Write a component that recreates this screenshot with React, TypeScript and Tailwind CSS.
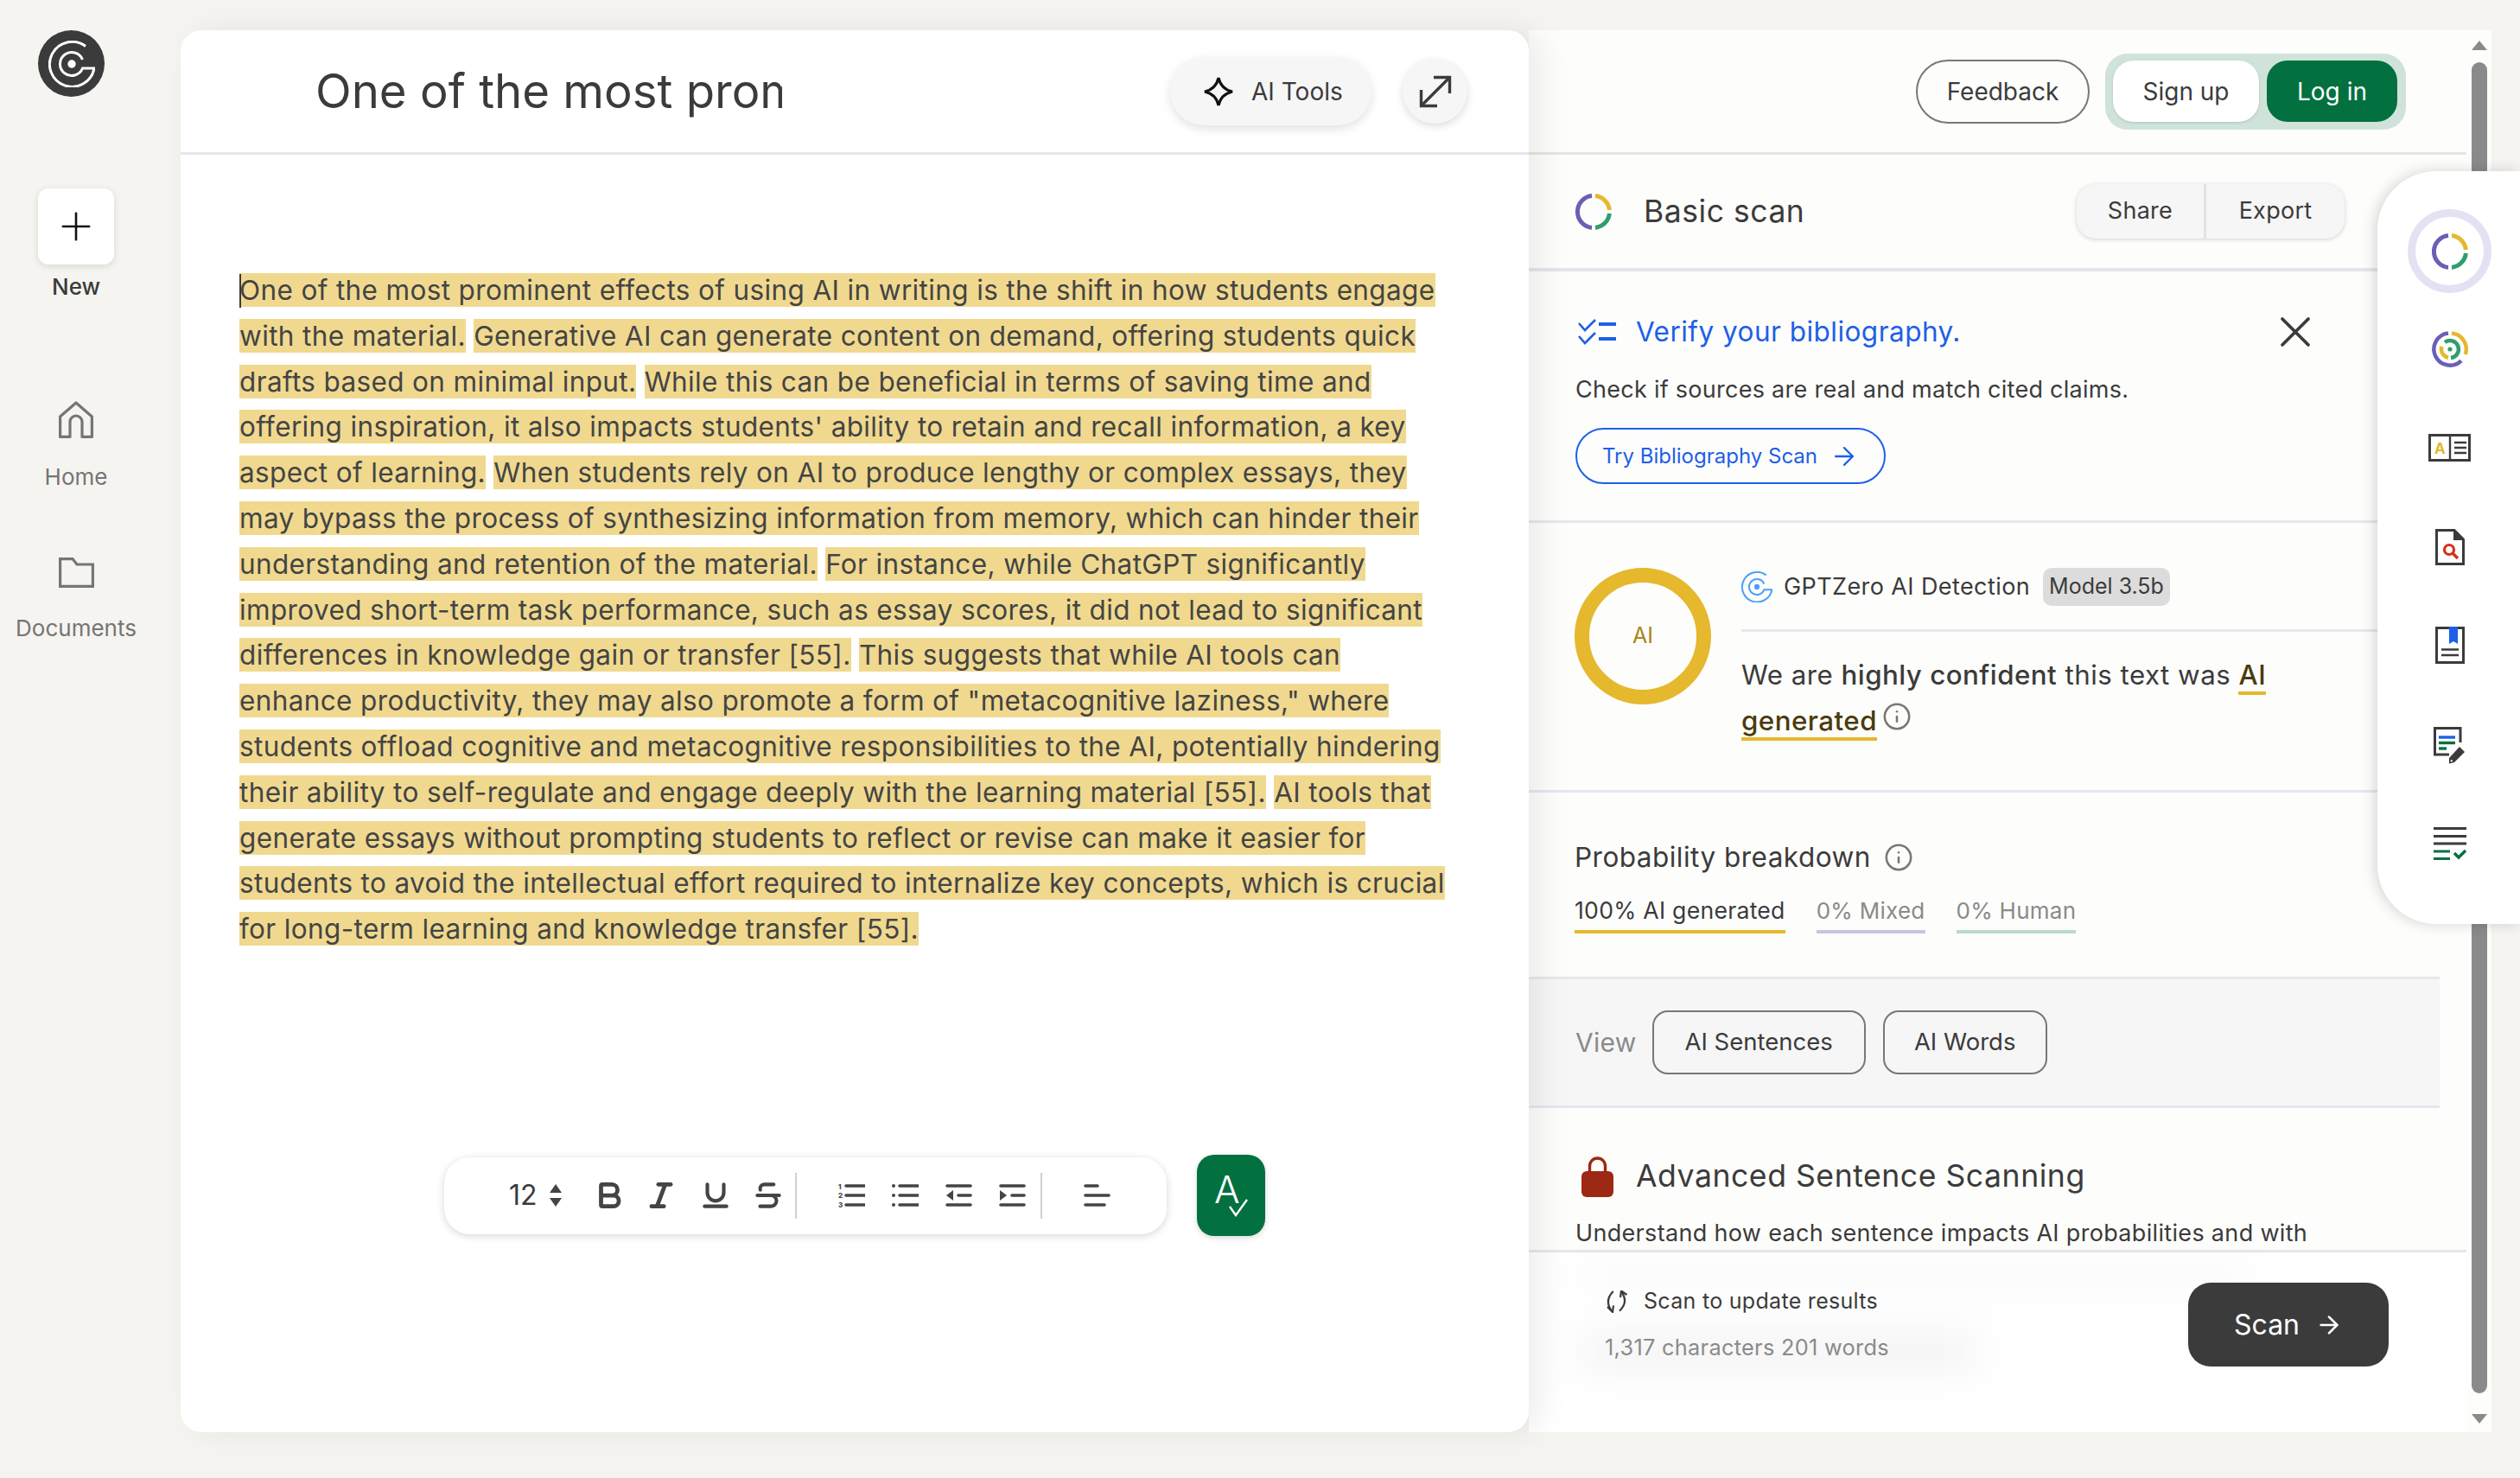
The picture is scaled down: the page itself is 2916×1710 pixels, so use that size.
import { ArrowRight, Bold, Italic, Underline, Strikethrough, Info, Plus, X } from 'lucide-react';

const sentences = [
  'One of the most prominent effects of using AI in writing is the shift in how students engage\nwith the material.',
  'Generative AI can generate content on demand, offering students quick\ndrafts based on minimal input.',
  "While this can be beneficial in terms of saving time and\noffering inspiration, it also impacts students' ability to retain and recall information, a key\naspect of learning.",
  'When students rely on AI to produce lengthy or complex essays, they\nmay bypass the process of synthesizing information from memory, which can hinder their\nunderstanding and retention of the material.',
  'For instance, while ChatGPT significantly\nimproved short-term task performance, such as essay scores, it did not lead to significant\ndifferences in knowledge gain or transfer [55].',
  'This suggests that while AI tools can\nenhance productivity, they may also promote a form of "metacognitive laziness," where\nstudents offload cognitive and metacognitive responsibilities to the AI, potentially hindering\ntheir ability to self-regulate and engage deeply with the learning material [55].',
  'AI tools that\ngenerate essays without prompting students to reflect or revise can make it easier for\nstudents to avoid the intellectual effort required to internalize key concepts, which is crucial\nfor long-term learning and knowledge transfer [55].',
];

function Swirl({ size, color }: { size: number; color: string }) {
  return (
    <svg width={size} height={size} viewBox="-27 -27 54 54" fill="none" stroke={color} strokeWidth="3">
      <path d="M16 -20.5A26 26 0 1 0 26 5H12.5A13.5 13.5 0 1 1 12.5 -5" />
      <circle r="4.7" fill={color} stroke="none" />
    </svg>
  );
}

function ScanRing({ size = 42 }: { size?: number }) {
  return (
    <svg width={size} height={size} viewBox="-21 -21 42 42" fill="none" strokeWidth="5">
      <path d="M-2 -18.4A18.5 18.5 0 0 0 -2 18.4" stroke="#6a5fb5" />
      <path d="M2 -18.4A18.5 18.5 0 0 1 18.4 -2" stroke="#e5b82e" />
      <path d="M18.4 2A18.5 18.5 0 0 1 2 18.4" stroke="#2f9e6e" />
    </svg>
  );
}

function TargetRing() {
  return (
    <svg width="42" height="42" viewBox="-21 -21 42 42" fill="none" strokeWidth="4.5">
      <path d="M-2 -18.5A18.6 18.6 0 1 0 13 13.3" stroke="#6a5fb5" />
      <path d="M2 -18.5A18.6 18.6 0 0 1 17.8 6" stroke="#e5b82e" />
      <path d="M-6 -8A10 10 0 1 1 1 10" stroke="#2f9e6e" />
      <path d="M-9.6 -3A10 10 0 0 0 -2 9.8" stroke="#e5b82e" />
      <circle r="2.6" fill="#2f9e6e" />
    </svg>
  );
}

function ReaderIcon() {
  return (
    <svg width="49" height="32" viewBox="0 0 49 32" fill="none">
      <rect x="1.5" y="1.5" width="46" height="29" stroke="#3b3b3b" strokeWidth="3" fill="#fff" />
      <path d="M25 1.5V30.5M30 10H44M30 16H44M30 22H44" stroke="#3b3b3b" strokeWidth="2.4" />
      <text x="7" y="23" fontSize="17" fontWeight="700" fill="#e5b82e" fontFamily="Inter, sans-serif">A</text>
    </svg>
  );
}

function FileSearchIcon() {
  return (
    <svg width="34" height="42" viewBox="0 0 34 42" fill="none">
      <path d="M1.5 1.5H22L32.5 12V40.5H1.5Z" stroke="#3b3b3b" strokeWidth="3" />
      <path d="M21 1L33 13H21Z" fill="#3b3b3b" />
      <circle cx="16" cy="24" r="5.5" stroke="#d62f1b" strokeWidth="3.2" />
      <path d="M20 28L26 34" stroke="#d62f1b" strokeWidth="3.6" />
    </svg>
  );
}

function BookmarkDocIcon() {
  return (
    <svg width="34" height="43" viewBox="0 0 34 43" fill="none">
      <rect x="1.5" y="1.5" width="31" height="40" stroke="#3b3b3b" strokeWidth="3" />
      <path d="M16 0H26V20L21 17L16 20Z" fill="#1d5fe8" />
      <path d="M7 26.5H27M7 33H27" stroke="#3b3b3b" strokeWidth="2.4" />
    </svg>
  );
}

function EditDocIcon() {
  return (
    <svg width="37" height="43" viewBox="0 0 37 43" fill="none">
      <path d="M31 18V1.5H1.5V32H18" stroke="#3b3b3b" strokeWidth="3" />
      <path d="M6 12H25" stroke="#1d5fe8" strokeWidth="3.4" />
      <path d="M6 18.5H25" stroke="#03703f" strokeWidth="3.4" />
      <path d="M6 25H15" stroke="#03703f" strokeWidth="3.4" />
      <path d="M30 23L36 29L24 41L18 42.5L18 36Z" fill="#3b3b3b" />
      <path d="M20 38.5L21.5 40" stroke="#fff" strokeWidth="2" />
    </svg>
  );
}

function ListCheckIcon() {
  return (
    <svg width="38" height="38" viewBox="0 0 38 38" fill="none">
      <path d="M0 1.5H38M0 10.5H38M0 19H38" stroke="#3b3b3b" strokeWidth="3" />
      <path d="M0 28H19M0 36.5H19" stroke="#03703f" strokeWidth="3" />
      <path d="M24 30L29 35L37 27" stroke="#03703f" strokeWidth="3.4" />
    </svg>
  );
}

function VerifyIcon() {
  return (
    <svg width="44" height="30" viewBox="0 0 44 30" fill="none" stroke="#1d5fe8" strokeWidth="2.6">
      <path d="M1 5L8 13L20 1" />
      <path d="M1 20L8 28L20 16" />
      <path d="M24 6H44M24 23H44" strokeWidth="4" />
    </svg>
  );
}

function LockIcon() {
  return (
    <svg width="37" height="47" viewBox="0 0 37 47" fill="none">
      <path d="M9.5 18V11A9 9 0 0 1 27.5 11V18" stroke="#9b2914" strokeWidth="3.4" />
      <rect y="17" width="37" height="30" rx="6" fill="#9b2914" />
    </svg>
  );
}

function SyncIcon() {
  return (
    <svg width="28" height="26" viewBox="0 0 28 26" fill="none" stroke="#3b3b3b" strokeWidth="2.2">
      <path d="M9.7 1Q-1 12 8 23.7" />
      <path d="M3 19L9 25L10 17.5" />
      <path d="M17 23.7Q28 13 19 1.5" />
      <path d="M25.5 5L19 0.5L18 8" />
    </svg>
  );
}

function SparkIcon() {
  return (
    <svg width="36" height="36" viewBox="0 0 36 36" fill="none" stroke="#111" strokeWidth="3.2">
      <path d="M18 2C20 11 25 16 34 18C25 20 20 25 18 34C16 25 11 20 2 18C11 16 16 11 18 2Z" />
    </svg>
  );
}

function ExpandIcon() {
  return (
    <svg width="38" height="38" viewBox="0 0 38 38" fill="none" stroke="#3b3b3b" strokeWidth="3.4">
      <path d="M3 35L35 3" />
      <path d="M17 2.5H35.5V21" />
      <path d="M2.5 17V35.5H21" />
    </svg>
  );
}

function HomeIcon() {
  return (
    <svg width="40" height="43" viewBox="0 0 40 43" fill="none" stroke="#757575" strokeWidth="3.2" strokeLinejoin="round">
      <path d="M1.6 18L20 2L38.4 18V41.4H27V24A7 7 0 0 0 13 24V41.4H1.6Z" />
    </svg>
  );
}

function FolderIcon() {
  return (
    <svg width="41" height="35" viewBox="0 0 41 35" fill="none" stroke="#757575" strokeWidth="3.2">
      <path d="M1.6 1.6H16L21 8H39.4V33.4H1.6Z" />
    </svg>
  );
}

function NumberedIcon() {
  return (
    <svg width="31" height="28" viewBox="0 0 31 28" fill="none">
      <path d="M9 3H31M9 14H31M9 25H31" stroke="#444" strokeWidth="3.6" strokeLinecap="round" />
      <text x="0" y="7" fontSize="8" fontWeight="800" fill="#444" fontFamily="Inter, sans-serif">1</text>
      <text x="0" y="17" fontSize="8" fontWeight="800" fill="#444" fontFamily="Inter, sans-serif">2</text>
      <text x="0" y="28" fontSize="8" fontWeight="800" fill="#444" fontFamily="Inter, sans-serif">3</text>
    </svg>
  );
}

function BulletIcon() {
  return (
    <svg width="31" height="28" viewBox="0 0 31 28" fill="none">
      <path d="M9 3H31M9 14H31M9 25H31" stroke="#444" strokeWidth="3.6" strokeLinecap="round" />
      <circle cx="2" cy="3" r="2" fill="#444" />
      <circle cx="2" cy="14" r="2" fill="#444" />
      <circle cx="2" cy="25" r="2" fill="#444" />
    </svg>
  );
}

function OutdentIcon() {
  return (
    <svg width="31" height="28" viewBox="0 0 31 28" fill="none">
      <path d="M2 3H29M2 25H29M15 14H29" stroke="#444" strokeWidth="3.6" strokeLinecap="round" />
      <path d="M9 8V20L1 14Z" fill="#444" />
    </svg>
  );
}

function IndentIcon() {
  return (
    <svg width="31" height="28" viewBox="0 0 31 28" fill="none">
      <path d="M2 3H29M2 25H29M15 14H29" stroke="#444" strokeWidth="3.6" strokeLinecap="round" />
      <path d="M1 8V20L9 14Z" fill="#444" />
    </svg>
  );
}

function AlignIcon() {
  return (
    <svg width="31" height="28" viewBox="0 0 31 28" fill="none">
      <path d="M2 3H16M2 14H29M2 25H24" stroke="#444" strokeWidth="3.6" strokeLinecap="round" />
    </svg>
  );
}

function Sidebar() {
  return (
    <aside className="w-[209px] shrink-0">
      <div className="w-[176px] flex flex-col items-center">
        <div className="self-start ml-[44px] w-[77px] h-[77px] rounded-full bg-[#3b3b3b] flex items-center justify-center">
          <Swirl size={54} color="#fff" />
        </div>
        <button className="mt-[106px] w-[88px] h-[88px] rounded-[12px] bg-white shadow-[0_2px_8px_rgba(0,0,0,0.12)] flex items-center justify-center">
          <Plus size={52} strokeWidth={1.2} color="#111" />
        </button>
        <div className="mt-[10px] h-[32px] leading-[32px] text-[26px] font-medium text-[#3b3b3b]">New</div>
        <div className="mt-[116px]"><HomeIcon /></div>
        <div className="mt-[29px] h-[32px] leading-[32px] text-[26px] text-[#757575]">Home</div>
        <div className="mt-[77px]"><FolderIcon /></div>
        <div className="mt-[31px] h-[32px] leading-[32px] text-[26px] text-[#757575]">Documents</div>
      </div>
    </aside>
  );
}

function Editor() {
  return (
    <main className="relative z-10 w-[1560px] shrink-0 bg-white rounded-[24px] shadow-[14px_0_36px_rgba(0,0,0,0.07)] flex flex-col">
      <header className="h-[144px] shrink-0 border-b-[3px] border-[#e7e6ee] flex items-center pl-[156px] pr-[71px]">
        <div className="w-[540px] overflow-hidden whitespace-nowrap text-[54.5px] text-[#3b3b3b]">
          One of the most prominent effects
        </div>
        <button className="ml-auto w-[233px] h-[79px] rounded-full bg-[#f6f6f6] shadow-[0_4px_12px_rgba(0,0,0,0.12)] flex items-center pl-[38px] gap-[20px] text-[28px] text-[#3b3b3b]">
          <SparkIcon />
          AI Tools
        </button>
        <button className="ml-[36px] w-[75px] h-[75px] rounded-full bg-[#f6f6f6] shadow-[0_3px_10px_rgba(0,0,0,0.14)] flex items-center justify-center">
          <ExpandIcon />
        </button>
      </header>
      <div className="flex-1 flex flex-col pl-[68px] pb-[227px]">
        <p className="relative mt-[131px] w-[1440px] whitespace-pre-line text-[31.5px] leading-[52.8px] tracking-[0.0116em] text-[#444]">
          <span className="absolute left-0 top-[7px] w-[2px] h-[39px] bg-[#3b3b3b]" />
          {sentences.map((s, i) => (
            <span key={i}>
              <span className="bg-[#f0d98f]">{s}</span>{' '}
            </span>
          ))}
        </p>
        <div className="mt-auto flex items-center">
          <div className="ml-[237px] w-[836px] h-[89px] rounded-[30px] bg-white shadow-[0_2px_10px_rgba(0,0,0,0.16)] flex items-center pl-[75px]">
            <span className="text-[32px] text-[#3b3b3b] leading-none">12</span>
            <svg className="ml-[14px]" width="14" height="26" viewBox="0 0 14 26" fill="#444">
              <path d="M7 0L14 10H0ZM7 26L0 16H14Z" />
            </svg>
            <Bold className="ml-[36px]" size={38} strokeWidth={3} color="#444" />
            <Italic className="ml-[22px]" size={38} strokeWidth={3} color="#444" />
            <Underline className="ml-[25px]" size={38} strokeWidth={2.6} color="#444" />
            <Strikethrough className="ml-[23px]" size={38} strokeWidth={2.6} color="#444" />
            <div className="ml-[12px] w-[2px] h-[53px] bg-[#cfcfd8]" />
            <div className="ml-[48px]"><NumberedIcon /></div>
            <div className="ml-[31px]"><BulletIcon /></div>
            <div className="ml-[31px]"><OutdentIcon /></div>
            <div className="ml-[31px]"><IndentIcon /></div>
            <div className="ml-[17px] w-[2px] h-[53px] bg-[#cfcfd8]" />
            <div className="ml-[48px]"><AlignIcon /></div>
          </div>
          <button className="relative ml-[35px] w-[79px] h-[94px] rounded-[20px] bg-[#03703f] shadow-[0_2px_6px_rgba(0,0,0,0.16)]">
            <span className="absolute left-[20px] top-[18px] text-[44px] leading-none font-light text-white">A</span>
            <svg className="absolute left-[36px] top-[50px]" width="24" height="22" viewBox="0 0 24 22" fill="none" stroke="#fff" strokeWidth="2.4">
              <path d="M2 10L9 20L22 2" />
            </svg>
          </button>
        </div>
      </div>
    </main>
  );
}

function ResultPanel() {
  return (
    <div className="flex-1 w-[1054px] overflow-hidden text-[#3b3b3b]">
      {/* Basic scan */}
      <section className="h-[135px] border-b-[4px] border-[#e5e4ec] flex items-center pl-[54px] pr-[110px]">
        <ScanRing />
        <h2 className="ml-[37px] text-[35.5px] tracking-[0.015em]">Basic scan</h2>
        <div className="ml-auto flex h-[63px] rounded-[22px] bg-[#f6f6f6] shadow-[0_1px_5px_rgba(0,0,0,0.18)] text-[27px] tracking-[0.01em]">
          <button className="w-[150px] border-r-[3px] border-[#e3e3e3]">Share</button>
          <button className="w-[160px]">Export</button>
        </div>
      </section>
      {/* Bibliography promo */}
      <section className="h-[291px] border-b-[3px] border-[#e7e6ee] pl-[57px] pr-[137px] pt-[50px]">
        <div className="flex items-center h-[40px]">
          <VerifyIcon />
          <span className="ml-[23px] text-[31.5px] tracking-[0.015em] text-[#1d5fe8]">Verify your bibliography.</span>
          <X className="ml-auto -my-[10px]" size={60} strokeWidth={1.5} color="#3b3b3b" />
        </div>
        <p className="-ml-[3px] mt-[27px] h-[40px] leading-[40px] text-[27px] tracking-[0.01em]">Check if sources are real and match cited claims.</p>
        <button className="-ml-[3px] mt-[24px] w-[359px] h-[65px] rounded-full border-[2.5px] border-[#1d5fe8] flex items-center justify-center gap-[14px] text-[24px] text-[#1d5fe8]">
          Try Bibliography Scan
          <ArrowRight size={34} strokeWidth={1.6} />
        </button>
      </section>
      {/* Detection verdict */}
      <section className="h-[312px] border-b-[3px] border-[#e7e6ee] pl-[53px] pt-[52px] flex">
        <div className="w-[158px] h-[158px] shrink-0 rounded-full border-[17px] border-[#e5b82e] flex items-center justify-center text-[25px] text-[#a88518]">AI</div>
        <div className="ml-[35px] w-[745px]">
          <div className="flex items-center h-[44px]">
            <Swirl size={36} color="#4d9ef8" />
            <span className="ml-[13px] text-[27px] tracking-[0.015em]">GPTZero AI Detection</span>
            <span className="ml-[15px] h-[44px] px-[7px] rounded-[10px] bg-[#dcdcdc] flex items-center text-[25px]">Model 3.5b</span>
          </div>
          <div className="mt-[27px] h-[3px] bg-[#e7e6ee]" />
          <p className="mt-[24px] text-[31.3px] leading-[53px] tracking-[0.015em]">
            We are <span className="font-medium">highly confident</span> this text was{' '}
            <span className="font-medium text-[#4a3b0c] border-b-[4px] border-[#e5b82e]">AI generated</span>
            <Info className="inline ml-[6px] -mt-[14px]" size={34} strokeWidth={1.8} color="#777" />
          </p>
        </div>
      </section>
      {/* Probability */}
      <section className="h-[216px] border-b-[3px] border-[#e7e6ee] pl-[53px] pt-[55px]">
        <div className="flex items-center h-[40px]">
          <span className="text-[31.5px] tracking-[0.015em]">Probability breakdown</span>
          <Info className="ml-[15px]" size={34} strokeWidth={1.8} color="#777" />
        </div>
        <div className="mt-[22px] flex gap-[36px] text-[26.6px] tracking-[0.01em]">
          <span className="h-[46px] border-b-[4px] border-[#e5b82e]">100% AI generated</span>
          <span className="h-[46px] border-b-[4px] border-[#c9c4e2] text-[#8a8a8a] text-[26px]">0% Mixed</span>
          <span className="h-[46px] border-b-[4px] border-[#b9dacb] text-[#8a8a8a] text-[26px]">0% Human</span>
        </div>
      </section>
      {/* View */}
      <section className="h-[149px] border-b-[3px] border-[#e7e6ee] bg-[#f6f6f7] pl-[54px] flex items-center text-[27.5px]">
        <span className="text-[30px] tracking-[0.01em] text-[#8a8a8a]">View</span>
        <button className="ml-[18px] w-[247px] h-[74px] rounded-[18px] border-2 border-[#777]">AI Sentences</button>
        <button className="ml-[20px] w-[190px] h-[74px] rounded-[18px] border-2 border-[#777]">AI Words</button>
      </section>
      {/* Advanced */}
      <section className="pl-[54px] pt-[54px]">
        <div className="flex items-center h-[50px]">
          <div className="ml-[7px]"><LockIcon /></div>
          <h3 className="ml-[26px] text-[35.6px] tracking-[0.015em]">Advanced Sentence Scanning</h3>
        </div>
        <p className="mt-[21px] h-[40px] leading-[40px] text-[27px] tracking-[0.012em]">Understand how each sentence impacts AI probabilities and with</p>
      </section>
    </div>
  );
}

function RightPanel() {
  return (
    <div className="w-[1114px] shrink-0 bg-[#fdfdfb] flex text-[#3b3b3b]">
      <div className="w-[1085px] shrink-0 flex flex-col">
        <div className="h-[144px] shrink-0 border-b-[3px] border-[#e6e5e1] flex items-center justify-end pr-[70px]">
          <button className="w-[201px] h-[74px] rounded-full border-2 border-[#777] text-[28px]">Feedback</button>
          <div className="ml-[18px] h-[88px] rounded-[26px] bg-[#cfe3da] flex items-center pl-[9px] pr-[10px] gap-[9px] text-[28px]">
            <button className="w-[169px] h-[71px] rounded-[24px] bg-white shadow-[0_1px_3px_rgba(0,0,0,0.15)]">Sign up</button>
            <button className="w-[151px] h-[71px] rounded-[24px] bg-[#03703f] text-white">Log in</button>
          </div>
        </div>
        <ResultPanel />
        <footer className="relative h-[211px] shrink-0 bg-white border-t-[3px] border-[#e7e6ee] flex pl-[88px] pr-[90px] pt-[35px]">
          <div className="absolute left-[60px] top-[10px] w-[780px] h-[34px] bg-black/[0.02] blur-xl" />
          <div className="absolute left-[60px] top-[95px] w-[460px] h-[40px] bg-black/[0.05] blur-xl" />
          <div className="relative pt-[2px]">
            <div className="flex items-center h-[40px] gap-[17px] text-[25px] tracking-[0.012em]">
              <SyncIcon />
              Scan to update results
            </div>
            <div className="mt-[13px] h-[40px] leading-[40px] text-[25.3px] tracking-[0.012em] text-[#8a8a8a]">1,317 characters 201 words</div>
          </div>
          <button className="relative ml-auto w-[232px] h-[97px] rounded-[26px] bg-[#3b3b3b] text-white text-[32px] flex items-center justify-center gap-[18px]">
            Scan
            <ArrowRight size={32} strokeWidth={2} />
          </button>
        </footer>
      </div>
      <div className="flex-1 flex flex-col items-center">
        <svg className="mt-[12px]" width="18" height="11" viewBox="0 0 18 11" fill="#8a8a8a">
          <path d="M9 0L18 11H0Z" />
        </svg>
        <div className="mt-[14px] w-[18px] h-[1540px] rounded-full bg-[#8a8a8a]" />
        <svg className="mt-[24px]" width="18" height="11" viewBox="0 0 18 11" fill="#8a8a8a">
          <path d="M9 11L0 0H18Z" />
        </svg>
      </div>
    </div>
  );
}

function ToolRail() {
  return (
    <nav className="absolute z-20 right-0 top-[198px] w-[165px] h-[871px] bg-white rounded-l-[68px] shadow-[-3px_0_16px_rgba(0,0,0,0.16)] pl-[35px] pt-[44px]">
      <div className="w-[97px] flex flex-col items-center">
        <div className="h-[141px]">
          <div className="w-[97px] h-[97px] rounded-full border-[9px] border-[#e3e1f2] flex items-center justify-center">
            <ScanRing />
          </div>
        </div>
        <div className="h-[119px]"><TargetRing /></div>
        <div className="h-[110px]"><ReaderIcon /></div>
        <div className="h-[113px]"><FileSearchIcon /></div>
        <div className="h-[116px]"><BookmarkDocIcon /></div>
        <div className="h-[116px]"><EditDocIcon /></div>
        <ListCheckIcon />
      </div>
    </nav>
  );
}

export default function App() {
  return (
    <div className="relative w-[2916px] h-[1710px] overflow-hidden bg-[#f5f4f0] flex pt-[35px] pb-[53px] font-['Inter',sans-serif]">
      <Sidebar />
      <Editor />
      <RightPanel />
      <ToolRail />
    </div>
  );
}
